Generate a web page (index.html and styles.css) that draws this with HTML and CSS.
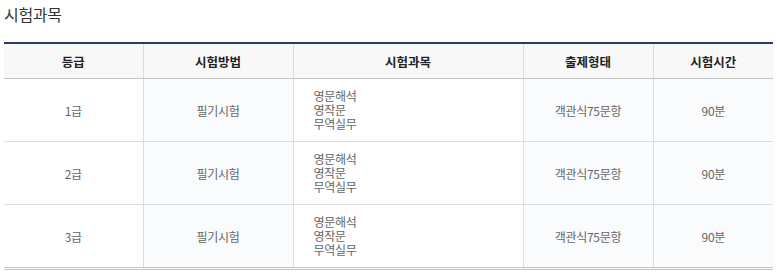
FILE: index.html
```html
<!DOCTYPE html>
<html lang="ko">
<head>
<meta charset="utf-8">
<link rel="stylesheet" href="styles.css">
</head>
<body>
<div class="wrap">
  <h3 class="title">시험과목</h3>
  <table class="tbl">
    <colgroup>
      <col class="c1"><col class="c2"><col class="c3"><col class="c4"><col class="c5">
    </colgroup>
    <thead>
      <tr><th>등급</th><th>시험방법</th><th>시험과목</th><th>출제형태</th><th>시험시간</th></tr>
    </thead>
    <tbody>
      <tr>
        <td>1급</td><td class="tint">필기시험</td>
        <td class="list"><div>영문해석</div><div>영작문</div><div>무역실무</div></td>
        <td class="tint">객관식75문항</td><td class="tint">90분</td>
      </tr>
      <tr>
        <td>2급</td><td class="tint">필기시험</td>
        <td class="list"><div>영문해석</div><div>영작문</div><div>무역실무</div></td>
        <td class="tint">객관식75문항</td><td class="tint">90분</td>
      </tr>
      <tr>
        <td>3급</td><td class="tint">필기시험</td>
        <td class="list"><div>영문해석</div><div>영작문</div><div>무역실무</div></td>
        <td class="tint">객관식75문항</td><td class="tint">90분</td>
      </tr>
    </tbody>
  </table>
</div>
</body>
</html>
```

FILE: styles.css
```css
html, body {
  margin: 0;
  padding: 0;
  background: #fff;
}
body {
  font-family: "Noto Sans CJK KR", "Noto Sans", sans-serif;
  color: #333;
}
.wrap {
  padding: 0 4px;
}
.title {
  margin: 0;
  padding-top: 3px;
  height: 42px;
  box-sizing: border-box;
  font-size: 16px;
  font-weight: normal;
  line-height: 22px;
  color: #333;
  letter-spacing: -0.3px;
}
.tbl {
  width: 769px;
  border-collapse: collapse;
  table-layout: fixed;
  border-top: 2px solid #2b3a6e;
  border-bottom: 3px double #c2c2c2;
}
.c1 { width: 139px; }
.c2 { width: 150px; }
.c3 { width: 230px; }
.c4 { width: 130px; }
.c5 { width: 120px; }
.tbl th {
  height: 34px;
  padding: 0;
  background: #f8f8f8;
  font-size: 12.5px;
  font-weight: bold;
  color: #222;
  border-bottom: 1px solid #c3c3c3;
  border-left: 1px solid #dcdcdc;
  text-align: center;
  vertical-align: middle;
}
.tbl td {
  height: 62px;
  padding: 0;
  font-size: 12px;
  color: #666;
  text-align: center;
  vertical-align: middle;
  border-left: 1px solid #dcdde2;
  border-top: 1px solid #dcdde2;
  letter-spacing: -0.3px;
}
.tbl tbody tr:first-child td {
  border-top: none;
}
.tbl th:first-child, .tbl td:first-child {
  border-left: none;
}
.tbl td.tint {
  background: #fafbfd;
}
.tbl td.list {
  text-align: left;
  padding-left: 20px;
  line-height: 14px;
}
```
